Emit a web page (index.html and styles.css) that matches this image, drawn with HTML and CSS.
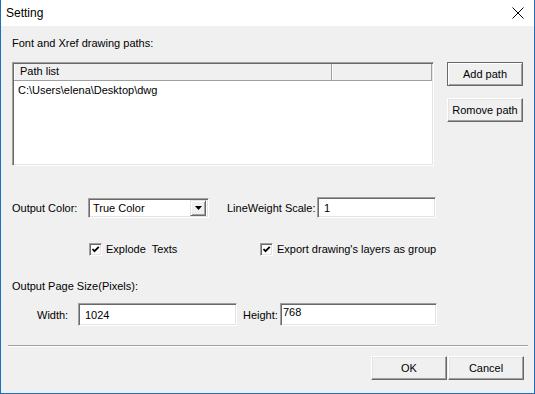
FILE: index.html
```html
<!DOCTYPE html>
<html>

<head>
    <title>Setting</title>
    <link rel="stylesheet" href="styles.css">
</head>

<body>
    <div class="window">
        <div class="titlebar">
            <span class="title">Setting</span>
            <svg class="close" width="12" height="12" viewBox="0 0 12 12">
                <path d="M0.5 0.5 L11.5 11.5 M11.5 0.5 L0.5 11.5" stroke="#000" stroke-width="1" fill="none" />
            </svg>
        </div>

        <div class="content">
            <div class="label">Font and Xref drawing paths:</div>

            <div class="paths">
                <div class="listbox">
                    <div class="list-header">
                        <div class="col col-path">Path list</div>
                        <div class="col col-rest"></div>
                    </div>
                    <div class="list-row">C:\Users\elena\Desktop\dwg</div>
                </div>
                <div class="side-buttons">
                    <button class="btn btn-default">Add path</button>
                    <button class="btn">Romove path</button>
                </div>
            </div>

            <div class="output-row">
                <span class="lbl-color">Output Color:</span>
                <div class="select">
                    <span class="select-text">True Color</span>
                    <span class="select-arrow">
                        <svg width="7" height="4" viewBox="0 0 7 4"><path d="M0 0 H7 L3.5 4 Z" fill="#000" /></svg>
                    </span>
                </div>
                <span class="lbl-scale">LineWeight Scale:</span>
                <div class="field field-scale">1</div>
            </div>

            <div class="check-row">
                <label class="check check-explode">
                    <span class="box"><svg width="9" height="9" viewBox="0 0 9 9"><path d="M1.5 4 L3.5 6.2 L7.8 1.8" stroke="#000" stroke-width="1.8" fill="none" /></svg></span>
                    Explode&nbsp; Texts
                </label>
                <label class="check">
                    <span class="box"><svg width="9" height="9" viewBox="0 0 9 9"><path d="M1.5 4 L3.5 6.2 L7.8 1.8" stroke="#000" stroke-width="1.8" fill="none" /></svg></span>
                    Export drawing's layers as group
                </label>
            </div>

            <div class="label label-size">Output Page Size(Pixels):</div>

            <div class="size-row">
                <span class="lbl-width">Width:</span>
                <div class="field field-width">1024</div>
                <span class="lbl-height">Height:</span>
                <div class="field field-height">768</div>
            </div>
        </div>

        <div class="separator"></div>

        <div class="footer">
            <button class="btn btn-footer">OK</button>
            <button class="btn btn-footer">Cancel</button>
        </div>
    </div>
</body>

</html>
```

FILE: styles.css
```css
/* Dialog window */
body {
    margin: 0;
    font-family: "Liberation Sans", Arial, sans-serif;
    font-size: 11px;
    color: #000;
}

.window {
    width: 535px;
    height: 394px;
    box-sizing: border-box;
    border: 1px solid #1c6fb8;
    border-top: none;
    background-color: #f0f0f0;
    display: flex;
    flex-direction: column;
}

.titlebar {
    height: 26px;
    background-color: #fff;
    display: flex;
    align-items: center;
    justify-content: space-between;
    padding: 0 10px 0 5px;
}

.title {
    font-size: 12px;
}

.content {
    padding: 11px 0 0 11px;
}

.label {
    line-height: 13px;
}

/* Path list */
.paths {
    display: flex;
    margin-top: 12px;
    gap: 13px;
}

.listbox {
    width: 422px;
    height: 104px;
    box-sizing: border-box;
    background-color: #fff;
    border-top: 1px solid #a0a0a0;
    border-left: 1px solid #a0a0a0;
    border-right: 1px solid #fff;
    border-bottom: 1px solid #fff;
    box-shadow: inset 1px 1px 0 #696969, inset -1px -1px 0 #e3e3e3;
    padding: 1px;
}

.list-header {
    display: flex;
    height: 17px;
    background-color: #f0f0f0;
    border-bottom: 1px solid #a0a0a0;
    box-sizing: border-box;
}

.col {
    line-height: 15px;
    padding-left: 5px;
    box-sizing: border-box;
    border-left: 1px solid #fff;
    border-right: 1px solid #a0a0a0;
}

.col-path {
    width: 320px;
}

.col-rest {
    width: 100px;
}

.list-row {
    padding: 3px 0 0 4px;
    line-height: 13px;
}

.side-buttons {
    display: flex;
    flex-direction: column;
    gap: 12px;
}

.btn {
    font-family: "Liberation Sans", Arial, sans-serif;
    font-size: 11px;
    color: #000;
    width: 76px;
    height: 24px;
    padding: 0;
    background-color: #f0f0f0;
    border-top: 1px solid #fff;
    border-left: 1px solid #fff;
    border-right: 1px solid #696969;
    border-bottom: 1px solid #696969;
    box-shadow: inset -1px -1px 0 #a0a0a0, inset 1px 1px 0 #e3e3e3;
}

.btn-default {
    border: 1px solid #696969;
    box-shadow: inset 1px 1px 0 #fff, inset -1px -1px 0 #a0a0a0;
}

/* Output color row */
.output-row {
    display: flex;
    align-items: center;
    margin-top: 31px;
    height: 21px;
}

.lbl-color {
    width: 76px;
}

.select {
    width: 121px;
    height: 20px;
    box-sizing: border-box;
    background-color: #fff;
    border-top: 1px solid #a0a0a0;
    border-left: 1px solid #a0a0a0;
    border-right: 1px solid #fff;
    border-bottom: 1px solid #fff;
    box-shadow: inset 1px 1px 0 #696969, inset -1px -1px 0 #e3e3e3;
    display: flex;
    align-items: center;
    justify-content: space-between;
    padding: 2px;
}

.select-text {
    padding-left: 2px;
}

.select-arrow {
    width: 16px;
    height: 16px;
    box-sizing: border-box;
    background-color: #f0f0f0;
    border-top: 1px solid #e3e3e3;
    border-left: 1px solid #e3e3e3;
    border-right: 1px solid #696969;
    border-bottom: 1px solid #696969;
    box-shadow: inset 1px 1px 0 #fff, inset -1px -1px 0 #a0a0a0;
    display: flex;
    align-items: center;
    justify-content: center;
}

.lbl-scale {
    margin-left: 18px;
    width: 90px;
}

.field {
    box-sizing: border-box;
    background-color: #fff;
    border-top: 1px solid #a0a0a0;
    border-left: 1px solid #a0a0a0;
    border-right: 1px solid #fff;
    border-bottom: 1px solid #fff;
    box-shadow: inset 1px 1px 0 #696969, inset -1px -1px 0 #e3e3e3;
    padding-left: 6px;
    display: flex;
    align-items: center;
}

.field-scale {
    width: 119px;
    height: 21px;
}

/* Checkboxes */
.check-row {
    display: flex;
    margin-top: 23px;
    padding-left: 77px;
    height: 16px;
    align-items: center;
}

.check {
    display: flex;
    align-items: center;
    gap: 4px;
}

.check-explode {
    width: 171px;
}

.box {
    width: 13px;
    height: 13px;
    box-sizing: border-box;
    background-color: #fff;
    border-top: 1px solid #a0a0a0;
    border-left: 1px solid #a0a0a0;
    border-right: 1px solid #fff;
    border-bottom: 1px solid #fff;
    box-shadow: inset 1px 1px 0 #696969, inset -1px -1px 0 #e3e3e3;
    display: flex;
    align-items: center;
    justify-content: center;
}

/* Page size */
.label-size {
    margin-top: 23px;
}

.size-row {
    display: flex;
    align-items: center;
    margin-top: 10px;
    padding-left: 25px;
}

.lbl-width {
    width: 41px;
}

.field-width {
    width: 159px;
    height: 23px;
}

.lbl-height {
    margin-left: 6px;
    width: 37px;
}

.field-height {
    width: 157px;
    height: 23px;
    padding-left: 2px;
    align-items: flex-start;
    padding-top: 2px;
}

/* Footer */
.separator {
    margin: 19px 6px 0 7px;
    border-top: 1px solid #a0a0a0;
    border-bottom: 1px solid #fff;
}

.footer {
    display: flex;
    justify-content: flex-end;
    gap: 1px;
    margin-top: 9px;
    padding-right: 10px;
}
```
